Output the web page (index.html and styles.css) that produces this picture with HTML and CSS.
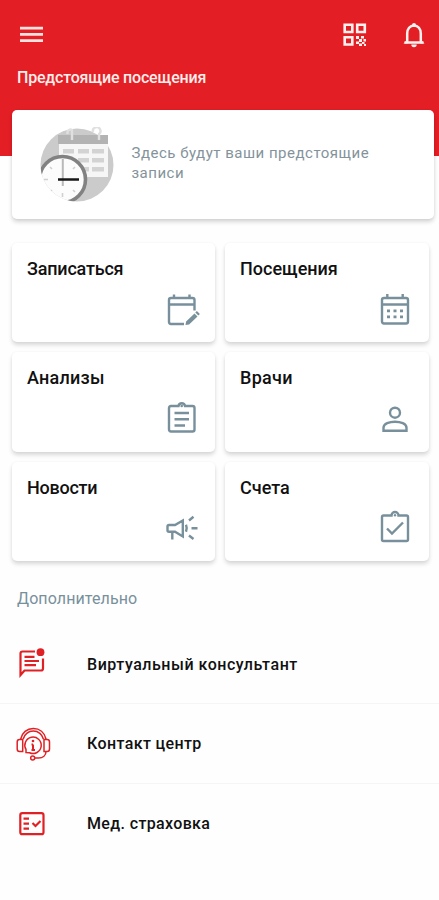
FILE: index.html
```html
<!DOCTYPE html>
<html lang="ru">
<head>
<meta charset="utf-8">
<title>Главная</title>
<link rel="stylesheet" href="styles.css">
</head>
<body>
<header class="header">
  <div class="bar">
    <svg class="menu" width="24" height="20" viewBox="0 0 24 20"><path d="M1 3.200h23M1 9.400h23M1 15.600h23" stroke="#ffe3e0" stroke-width="2.800"/></svg>
    <svg class="qr" width="26" height="26" viewBox="0 0 26 26" fill="none" stroke="#fff1ee" stroke-width="2.600"><path d="M2.700 2.700h7.600v7.300H2.700zM15.200 2.700h7.600v7.300h-7.600zM2.700 15.200h7.600v7.300H2.700z"/><path d="M14 14h3v3h-3zM19 14h3v2.500h-3zM17 17h3v3h-3zM21.500 17H24v2.500h-2.500zM14 19.500h3v2.500h-3zM20 20h2.500v2H20zM17 21.500h3V24h-3zM22 22h2v2h-2z" fill="#fff1ee" stroke="none"/></svg>
    <svg class="bell" width="24" height="28" viewBox="0 0 24 28"><path d="M2.500 21.500h19M5.200 21v-8.500c0-4.500 2.700-8 6.800-8s6.800 3.500 6.800 8V21" fill="none" stroke="#fff1ee" stroke-width="2.500"/><path d="M1.500 22.500l4-4v4zM22.500 22.500l-4-4v4zM10 4a2 2 0 0 1 4 0v2h-4zM9.300 23.500h5.400a2.700 2.700 0 0 1-5.400 0z" fill="#fff1ee"/></svg>
  </div>
  <h1 class="heading">Предстоящие посещения</h1>
</header>
<main>
  <section class="visit">
    <svg class="art" width="76" height="76" viewBox="39 126 76 76">
      <defs><clipPath id="disc"><circle cx="77" cy="164" r="36.500"/></clipPath></defs>
      <circle cx="77" cy="164" r="36.500" fill="#cbcbcb"/>
      <path d="M59 142h49v34H59z" fill="#f6f6f6"/>
      <path d="M58 134h50v9H58z" fill="#b3b3b3"/>
      <path d="M63 148h11v4.500H63zM78 148h11v4.500H78zM92 148h12v4.500H92zM63 157h11v4.500H63zM78 157h11v4.500H78zM92 157h12v4.500H92zM78 166h11v4.500H78zM92 166h12v4.500H92z" fill="#d3d3d3"/>
      <path d="M67.500 133v-2a3 3 0 0 1 4.500-2v10M93 131a3.800 3.800 0 1 1 6 2v6" fill="none" stroke="#e0e0e0" stroke-width="2.400"/>
      <g clip-path="url(#disc)">
        <circle cx="62.500" cy="178.500" r="23" fill="#fcfcfc" stroke="#828282" stroke-width="3.600"/>
        <path d="M62.500 192v4M48 178.500h-4M52 168l-2-2M73 168l2-2M52 189l-2 2M73 189l2 2" stroke="#d0d0d0" stroke-width="1.600"/>
        <path d="M62.800 158v27" stroke="#b9b9b9" stroke-width="2"/>
        <path d="M58 178.500h21" stroke="#171717" stroke-width="2.600"/>
      </g>
    </svg>
    <p class="note">Здесь будут ваши предстоящие<br>записи</p>
  </section>
  <section class="tiles">
    <a class="tile"><span class="t1">Записаться</span>
      <svg class="icon" viewBox="0 0 36 36"><path d="M20 33H7q-2 0-2-2V9q0-2 2-2h21.500q2 0 2 2v10.500M5 13.500h25.500M10 7V3.500M25.500 7V3.500"/><path d="M21.500 34l.6-3.600 8.400-8 3 3-8.400 8zM31.300 21.500l1.600-1.600 3 3-1.600 1.600z" class="solid"/></svg></a>
    <a class="tile"><span class="t2">Посещения</span>
      <svg class="icon" viewBox="0 0 36 36"><path d="M7 7h22q2 0 2 2v21.500q0 2-2 2H7q-2 0-2-2V9q0-2 2-2zM5 13.500h26M10.300 7V3M25.700 7V3"/><path d="M10 18.500h3v2.700h-3zM16.500 18.500h3v2.700h-3zM23 18.500h3v2.700h-3zM10 24.500h3v2.700h-3zM16.500 24.500h3v2.700h-3zM23 24.500h3v2.700h-3z" class="solid"/></svg></a>
    <a class="tile"><span class="t3">Анализы</span>
      <svg class="icon" viewBox="0 0 36 36"><path d="M7 5h7.500a3.300 3.300 0 0 1 6.500 0H28.500q2 0 2 2v21.500q0 2-2 2H7q-2 0-2-2V7q0-2 2-2zM10.500 12h14.500M10.500 18.200h14.500M10.500 24.500h10.500"/><circle cx="17.700" cy="5" r="1.300" class="solid"/></svg></a>
    <a class="tile"><span class="t4">Врачи</span>
      <svg class="icon" viewBox="0 0 36 36"><circle cx="18" cy="11.700" r="5"/><path d="M6.500 29.700v-3c0-4 6-6 11.500-6s11.500 2 11.500 6v3z"/></svg></a>
    <a class="tile"><span class="t5">Новости</span>
      <svg class="icon" viewBox="0 0 36 36"><path d="M18.800 10.500L11 15H5q-1.500 0-1.500 1.500v3.800q0 1.500 1.500 1.500h6l7.800 4.700zM8.300 22v7.500M22 14.800q1.500 3.500 0 7M25 10.500l4.500-3.700M27.500 18.200h6M25 25.500l4.500 3.500"/></svg></a>
    <a class="tile"><span class="t6">Счета</span>
      <svg class="icon" viewBox="0 0 36 36"><path d="M6.500 5.500h8a3.500 3.500 0 0 1 7 0h8q1.500 0 1.500 1.500v22.500q0 1.500-1.500 1.500h-23Q5 31 5 29.500V7q0-1.500 1.500-1.500zM10 18.500l5 5L26 12.500"/><circle cx="18" cy="5.200" r="1.200" class="solid"/></svg></a>
  </section>
  <h2 class="more">Дополнительно</h2>
  <ul class="list">
    <li class="row"><svg class="red" viewBox="0 0 36 36"><path d="M19 5.500H6.500q-2 0-2 2V29l4-4.500H25q2 0 2-2V12.500M8.500 10.800h10M8.500 15h14.500M8.500 19.200h11.500"/><circle cx="24.500" cy="6.200" r="3.900" class="fill"/></svg><span class="r1">Виртуальный консультант</span></li>
    <li class="row"><svg class="red thin" viewBox="0 0 36 36"><path d="M4.700 13C6 6.500 11 2.500 17.300 2.500S28.500 6.500 30 13M7.200 13c1-4.500 5-8 10.100-8s9 3.500 10.100 8M3.500 13.500h3.200v12H3.500q-2.300 0-2.300-2.500v-7q0-2.500 2.300-2.500zM28 13.500h3.200q2.300 0 2.300 2.500v7q0 2.500-2.300 2.500H28zM30 25.500c0 4-3 6.500-7.500 6.500H19"/><path d="M10 26.500v-3a8.200 8.200 0 1 1 3.500 3.200z"/><circle cx="16.700" cy="32" r="2"/><path d="M17 18.500v5.500M15.500 18.500H17M15.500 24h3.500" stroke-width="2"/><circle cx="17" cy="15" r="1.300" class="fill"/></svg><span class="r2">Контакт центр</span></li>
    <li class="row"><svg class="red" viewBox="0 0 36 36"><rect x="4.300" y="7.200" width="23.200" height="21" rx="2"/><path d="M7.500 12.700h5.500M7.500 17.700h5.500M7.500 22.700h5.500M16.500 17l3 3 5-5"/></svg><span class="r3">Мед. страховка</span></li>
  </ul>
</main>
</body>
</html>
```
FILE: styles.css
```css
* { box-sizing: border-box; }
body { margin: 0; background: #fefefe; color: #111; font-family: Roboto, "Liberation Sans", sans-serif; font-weight: 500; }
svg { display: block; flex: none; }
.header { height: 156px; background: #e41e25; padding: 20px 13px 0 19px; }
.bar { display: flex; align-items: center; height: 30px; }
.menu { margin-right: auto; }
.qr { margin-right: 34px; }
.heading { margin: 18px 0 0 -2px; font-size: 16px; line-height: 20px; font-weight: 500; color: #ffefec; letter-spacing: -.19px; white-space: nowrap; }
.visit { display: flex; align-items: center; width: 422px; height: 109px; margin: -46px 0 0 12px; padding: 0 0 0 27px; background: #fff; border-radius: 5px; box-shadow: 0 3px 4px rgba(0,0,0,.16), 0 0 3px rgba(0,0,0,.06); }
.art { margin-left: -.5px; }
.note { margin: 0 0 4px 17px; font-size: 15px; line-height: 20px; font-weight: 400; color: #84939b; letter-spacing: .5px; white-space: nowrap; }
.tiles { display: grid; grid-template-columns: 203px 204px; grid-auto-rows: 99.3px; gap: 10px; margin: 24px 0 0 12px; }
.tile { display: flex; flex-direction: column; justify-content: space-between; padding: 15px; background: #fff; border-radius: 5px; font-size: 18px; line-height: 22px; box-shadow: 0 3px 4px rgba(0,0,0,.15), 0 0 3px rgba(0,0,0,.04); }
.tile:nth-child(even) { padding-right: 16px; }
.t1 { letter-spacing: -.2px; }
.t3 { letter-spacing: .25px; }
.t4 { letter-spacing: .3px; }
.t5 { letter-spacing: -.25px; }
.icon { width: 36px; height: 36px; align-self: flex-end; fill: none; stroke: #78909c; stroke-width: 2.4; }
.icon .solid { fill: #78909c; stroke: none; }
.more { margin: 28px 0 0 17px; font-size: 16px; line-height: 20px; font-weight: 400; color: #78909c; letter-spacing: .1px; }
.list { list-style: none; margin: 16px 0 0; padding: 0; }
.row { display: flex; align-items: center; height: 79.5px; padding-left: 16px; font-size: 16px; border-bottom: 1px solid #f5f5f5; }
.row:last-child { border: 0; }
.row span { margin-left: 35px; white-space: nowrap; }
.r1 { letter-spacing: .53px; }
.r2 { letter-spacing: .38px; }
.r3 { letter-spacing: .36px; }
.red { width: 36px; height: 36px; fill: none; stroke: #df2025; stroke-width: 2.2; }
.red.thin { stroke-width: 1.5; }
.red .fill { fill: #df2025; stroke: none; }
```
